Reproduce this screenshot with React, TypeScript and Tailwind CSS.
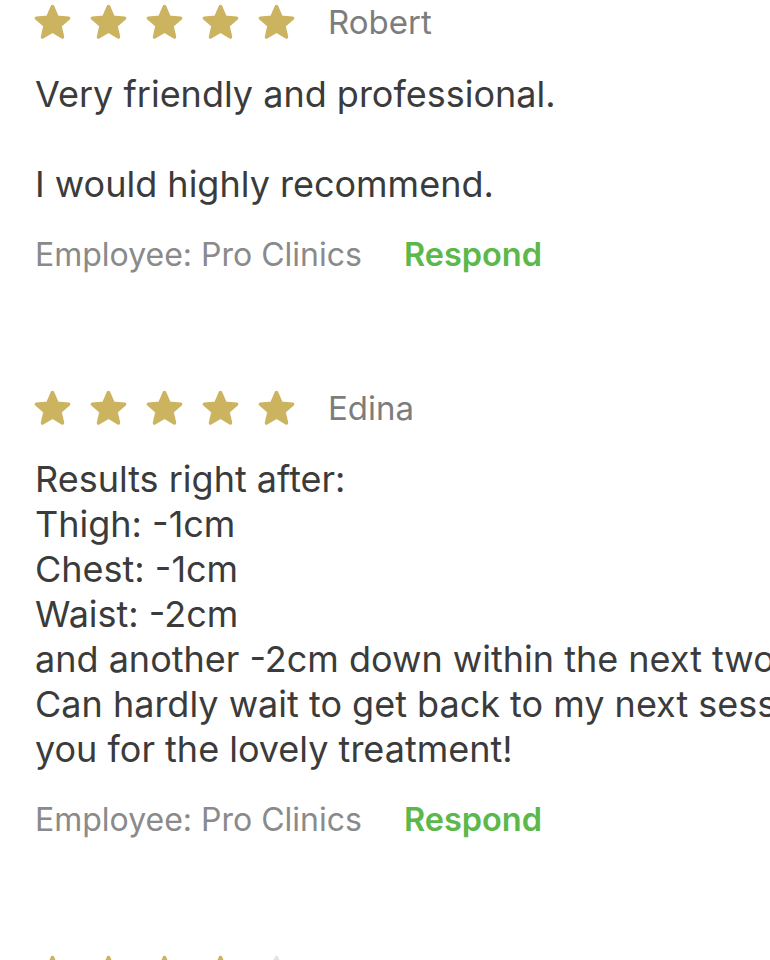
import React from "react";

const Star = ({ filled = true }: { filled?: boolean }) => (
  <svg width="39" height="37" viewBox="0 0 24 23" className="shrink-0">
    <polygon
      points="12,1.6 14.9,8.2 22,8.8 16.6,13.5 18.2,20.5 12,16.8 5.8,20.5 7.4,13.5 2,8.8 9.1,8.2"
      fill={filled ? "#ccb35f" : "#e3e3e3"}
      stroke={filled ? "#ccb35f" : "#e3e3e3"}
      strokeWidth="2.2"
      strokeLinejoin="round"
    />
  </svg>
);

const Stars = ({ count, name }: { count: number; name?: string }) => (
  <div className="flex h-[45px] items-center">
    <div className="flex items-center gap-[17px] -ml-[2px]">
      {[0, 1, 2, 3, 4].map((i) => (
        <Star key={i} filled={i < count} />
      ))}
    </div>
    {name && (
      <span className="ml-[32px] text-[33px] leading-[45px] text-[#7d7d7d]">{name}</span>
    )}
  </div>
);

const Footer = () => (
  <div className="mt-[25px] flex h-[45px] items-center leading-[45px]">
    <span className="text-[32px] text-[#8a8a8a]">Employee: Pro Clinics</span>
    <span className="ml-[42px] text-[32.5px] font-semibold text-[#5cb84a]">Respond</span>
  </div>
);

export default function App() {
  return (
    <div
      className="h-[960px] w-[770px] overflow-hidden bg-white pl-[35px]"
      style={{ fontFamily: "Inter, 'Liberation Sans', sans-serif" }}
    >
      <Stars count={5} name="Robert" />
      <div className="mt-[27px] whitespace-nowrap text-[36px] leading-[45px] text-[#3b3b3b]">
        <div>Very friendly and professional.</div>
        <div>&nbsp;</div>
        <div>I would highly recommend.</div>
      </div>
      <Footer />

      <div className="mt-[109px]">
        <Stars count={5} name="Edina" />
      </div>
      <div className="mt-[26px] whitespace-nowrap text-[36px] leading-[45px] text-[#3b3b3b]">
        <div>Results right after:</div>
        <div>Thigh: -1cm</div>
        <div>Chest: -1cm</div>
        <div>Waist: -2cm</div>
        <div>and another -2cm down within the next two</div>
        <div>Can hardly wait to get back to my next session.</div>
        <div>you for the lovely treatment!</div>
      </div>
      <Footer />

      <div className="mt-[109px]">
        <Stars count={4} />
      </div>
    </div>
  );
}
